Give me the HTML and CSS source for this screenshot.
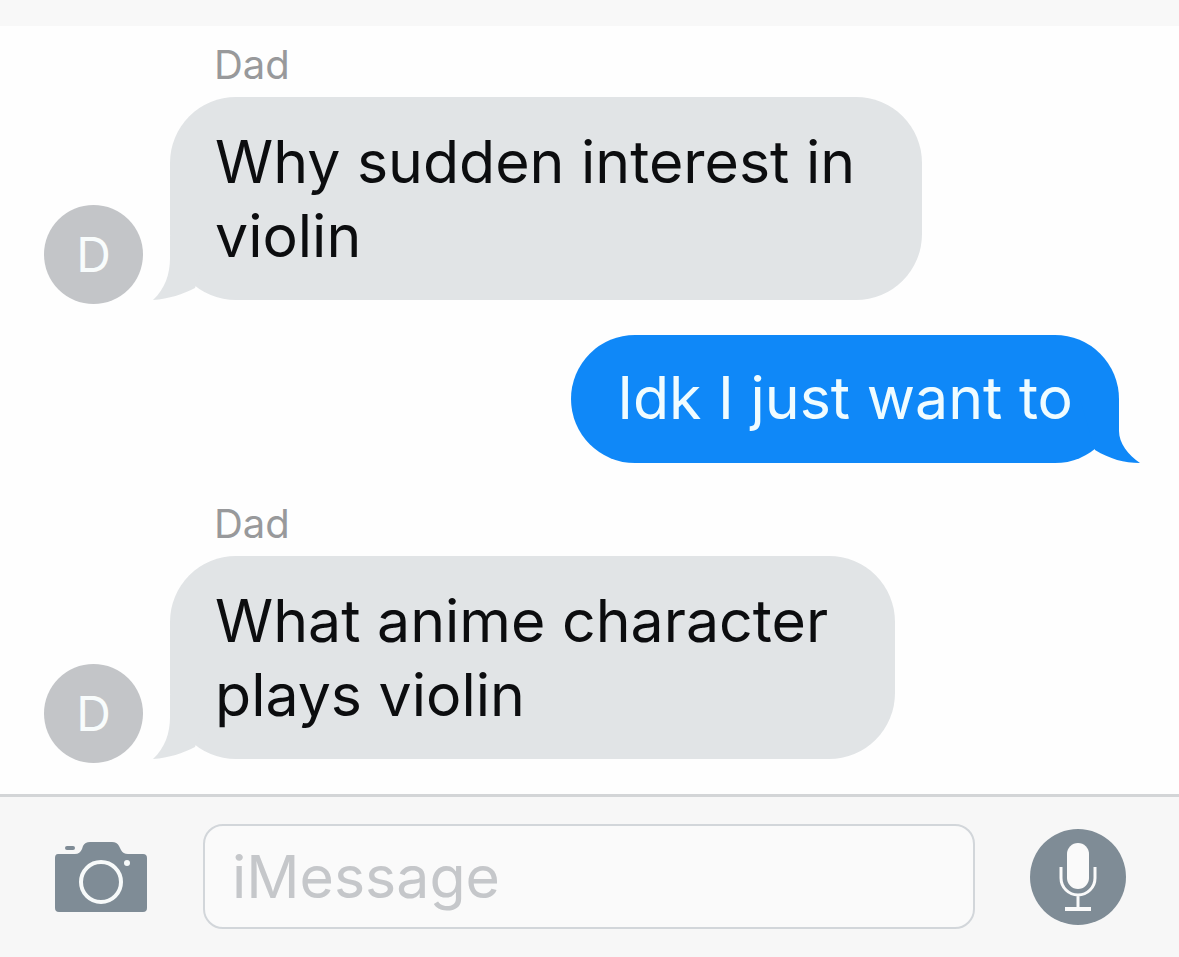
FILE: index.html
```html
<!DOCTYPE html>
<html lang="en">
<head>
    <meta charset="UTF-8">
    <meta name="viewport" content="width=device-width, initial-scale=1.0">
    <title>Messages</title>
    <link rel="stylesheet" href="styles.css">
</head>
<body>

<header class="top-bar"></header>

<!-- Conversation -->
<main class="chat">
    <div class="message received">
        <div class="sender">Dad</div>
        <div class="row">
            <div class="avatar">D</div>
            <div class="bubble">
                Why sudden interest in<br>violin
                <svg class="tail" viewBox="0 0 60 64" aria-hidden="true"><path d="M17 0V22C17 38 12 53 0 64C16 63 30 58 42 52L60 0Z"/></svg>
            </div>
        </div>
    </div>

    <div class="message sent">
        <div class="bubble">
            Idk I just want to
            <svg class="tail" viewBox="0 0 60 64" aria-hidden="true"><path d="M39 0V32C39 44 48 56 60 64C44 64 30 60 15 51L0 0Z"/></svg>
        </div>
    </div>

    <div class="message received">
        <div class="sender">Dad</div>
        <div class="row">
            <div class="avatar">D</div>
            <div class="bubble">
                What anime character<br>plays violin
                <svg class="tail" viewBox="0 0 60 64" aria-hidden="true"><path d="M17 0V22C17 38 12 53 0 64C16 63 30 58 42 52L60 0Z"/></svg>
            </div>
        </div>
    </div>
</main>

<!-- Compose bar -->
<form class="compose">
    <button type="button" class="icon-button" aria-label="Camera">
        <svg width="94" height="70" viewBox="0 0 94 70">
            <path fill="#7f8c96" d="M4 12H21Q26 12 28 7L29 4Q31 0 36 0H58Q63 0 65 4L67 8Q69 12 74 12H89Q93 12 93 16V66Q93 70 89 70H5Q1 70 1 66V16Q1 12 4 12Z"/>
            <rect x="11" y="4" width="10" height="4" rx="2" fill="#7f8c96"/>
            <circle cx="47" cy="40" r="20" fill="none" stroke="#f7fafa" stroke-width="4"/>
            <circle cx="73" cy="21" r="3" fill="#f7fafa"/>
        </svg>
    </button>
    <input type="text" class="message-input" placeholder="iMessage" aria-label="iMessage">
    <button type="button" class="icon-button" aria-label="Record audio">
        <svg width="96" height="96" viewBox="0 0 96 96">
            <circle cx="48" cy="48" r="48" fill="#7f8c96"/>
            <rect x="37" y="14" width="22" height="46" rx="11" fill="#fafafa"/>
            <path fill="none" stroke="#fafafa" stroke-width="3" d="M31 38V49A17 17 0 0 0 65 49V38M48 66V79"/>
            <path fill="none" stroke="#fafafa" stroke-width="4" d="M35 80H61"/>
        </svg>
    </button>
</form>

</body>
</html>
```

FILE: styles.css
```css
* {
    box-sizing: border-box;
}

body {
    margin: 0;
    min-height: 100vh;
    display: flex;
    flex-direction: column;
    font-family: Inter, "Liberation Sans", sans-serif;
    background-color: #fefefe;
}

.top-bar {
    height: 26px;
    background-color: #f8f8f8;
}

.chat {
    flex: 1;
    display: flex;
    flex-direction: column;
    gap: 35px;
    padding: 13px 60px 35px 44px;
}

.sender {
    padding: 0 0 6px 170px;
    font-size: 40px;
    line-height: 52px;
    color: #98999b;
}

.row {
    display: flex;
    align-items: flex-end;
    gap: 27px;
}

.avatar {
    width: 99px;
    height: 99px;
    margin-bottom: -4px;
    border-radius: 50%;
    background-color: #c3c5c8;
    color: #f8fcfc;
    font-size: 48px;
    line-height: 99px;
    text-align: center;
}

.bubble {
    position: relative;
    padding: 28px 67px 27px 45px;
    border-radius: 66px;
    background-color: #e1e4e6;
    color: #0c0d0f;
    font-size: 59px;
    line-height: 74px;
}

.sent {
    display: flex;
    justify-content: flex-end;
}

.sent .bubble {
    padding: 26px 46px 28px;
    background-color: #0f88f8;
    color: #f0fcff;
}

/* little hook at the bottom corner of each bubble */
.tail {
    position: absolute;
    bottom: 0;
    left: -17px;
    width: 60px;
    height: 64px;
    fill: #e1e4e6;
}

.sent .tail {
    left: auto;
    right: -21px;
    fill: #0f88f8;
}

.compose {
    display: flex;
    align-items: center;
    gap: 55px;
    padding: 27px 53px 28px 54px;
    border-top: 3px solid #d3d5d7;
    background-color: #f7f7f7;
}

.icon-button {
    padding: 0;
    border: none;
    background: none;
    cursor: pointer;
}

.icon-button svg {
    display: block;
}

.message-input {
    flex: 1;
    min-width: 0;
    height: 105px;
    padding: 0 27px;
    border: 2px solid #d2d6da;
    border-radius: 20px;
    background-color: #fafafa;
    color: #0c0d0f;
    font-family: inherit;
    font-size: 59px;
}

.message-input::placeholder {
    color: #c5c7ca;
    opacity: 1;
}
```
